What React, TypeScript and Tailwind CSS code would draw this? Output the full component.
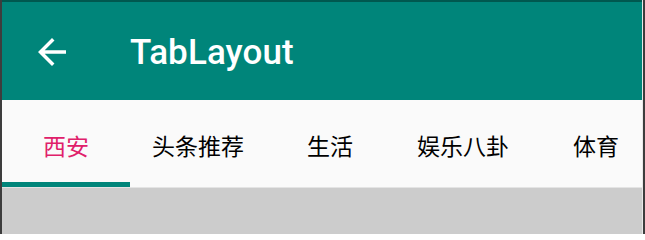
const tabs = [
  { label: '西安', w: 'w-[128px]' },
  { label: '头条推荐', w: 'w-[136px]' },
  { label: '生活', w: 'w-[128px]' },
  { label: '娱乐八卦', w: 'w-[138px]' },
  { label: '体育', w: 'w-[128px]' },
];

function BackArrow() {
  return (
    <svg viewBox="0 0 24 24" className="w-[42px] h-[42px] fill-white">
      <path d="M20 11H7.83l5.59-5.59L12 4l-8 8 8 8 1.41-1.41L7.83 13H20v-2z" />
    </svg>
  );
}

export default function App() {
  return (
    <div className="w-[645px] h-[234px] flex bg-[#cccccc] overflow-hidden">
      <div className="w-[2px] shrink-0 bg-[#3d3d3d]" />
      <div className="flex-1 min-w-0 flex flex-col">
        <div className="h-[2px] bg-[#00584f]" />
        <header className="h-[98px] bg-[#00857a] flex items-center">
          <button className="ml-[29px] mt-[1px] w-[42px] h-[42px] flex items-center justify-center">
            <BackArrow />
          </button>
          <h1 className="ml-[57px] text-white text-[35px] font-medium font-['Roboto',sans-serif] leading-none tracking-[0.1px] mt-[3px]">
            TabLayout
          </h1>
        </header>
        <nav className="h-[88px] bg-[#fafafa] flex overflow-hidden border-b border-[#e4e4e4]">
          {tabs.map((t, i) => (
            <div
              key={t.label}
              className={`${t.w} shrink-0 relative flex items-center justify-center pt-[3px] text-[23px] font-['Noto_Sans_CJK_SC',sans-serif] ${i === 0 ? 'text-[#e0206a]' : 'text-black'}`}
            >
              {t.label}
              {i === 0 && <span className="absolute left-0 right-0 bottom-0 h-[5px] bg-[#00857a]" />}
            </div>
          ))}
        </nav>
        <div className="flex-1 bg-[#cccccc]" />
      </div>
      <div className="w-[1px] shrink-0 bg-[#e8e8e8]" />
      <div className="w-[2px] shrink-0 bg-[#3d3d3d]" />
    </div>
  );
}
